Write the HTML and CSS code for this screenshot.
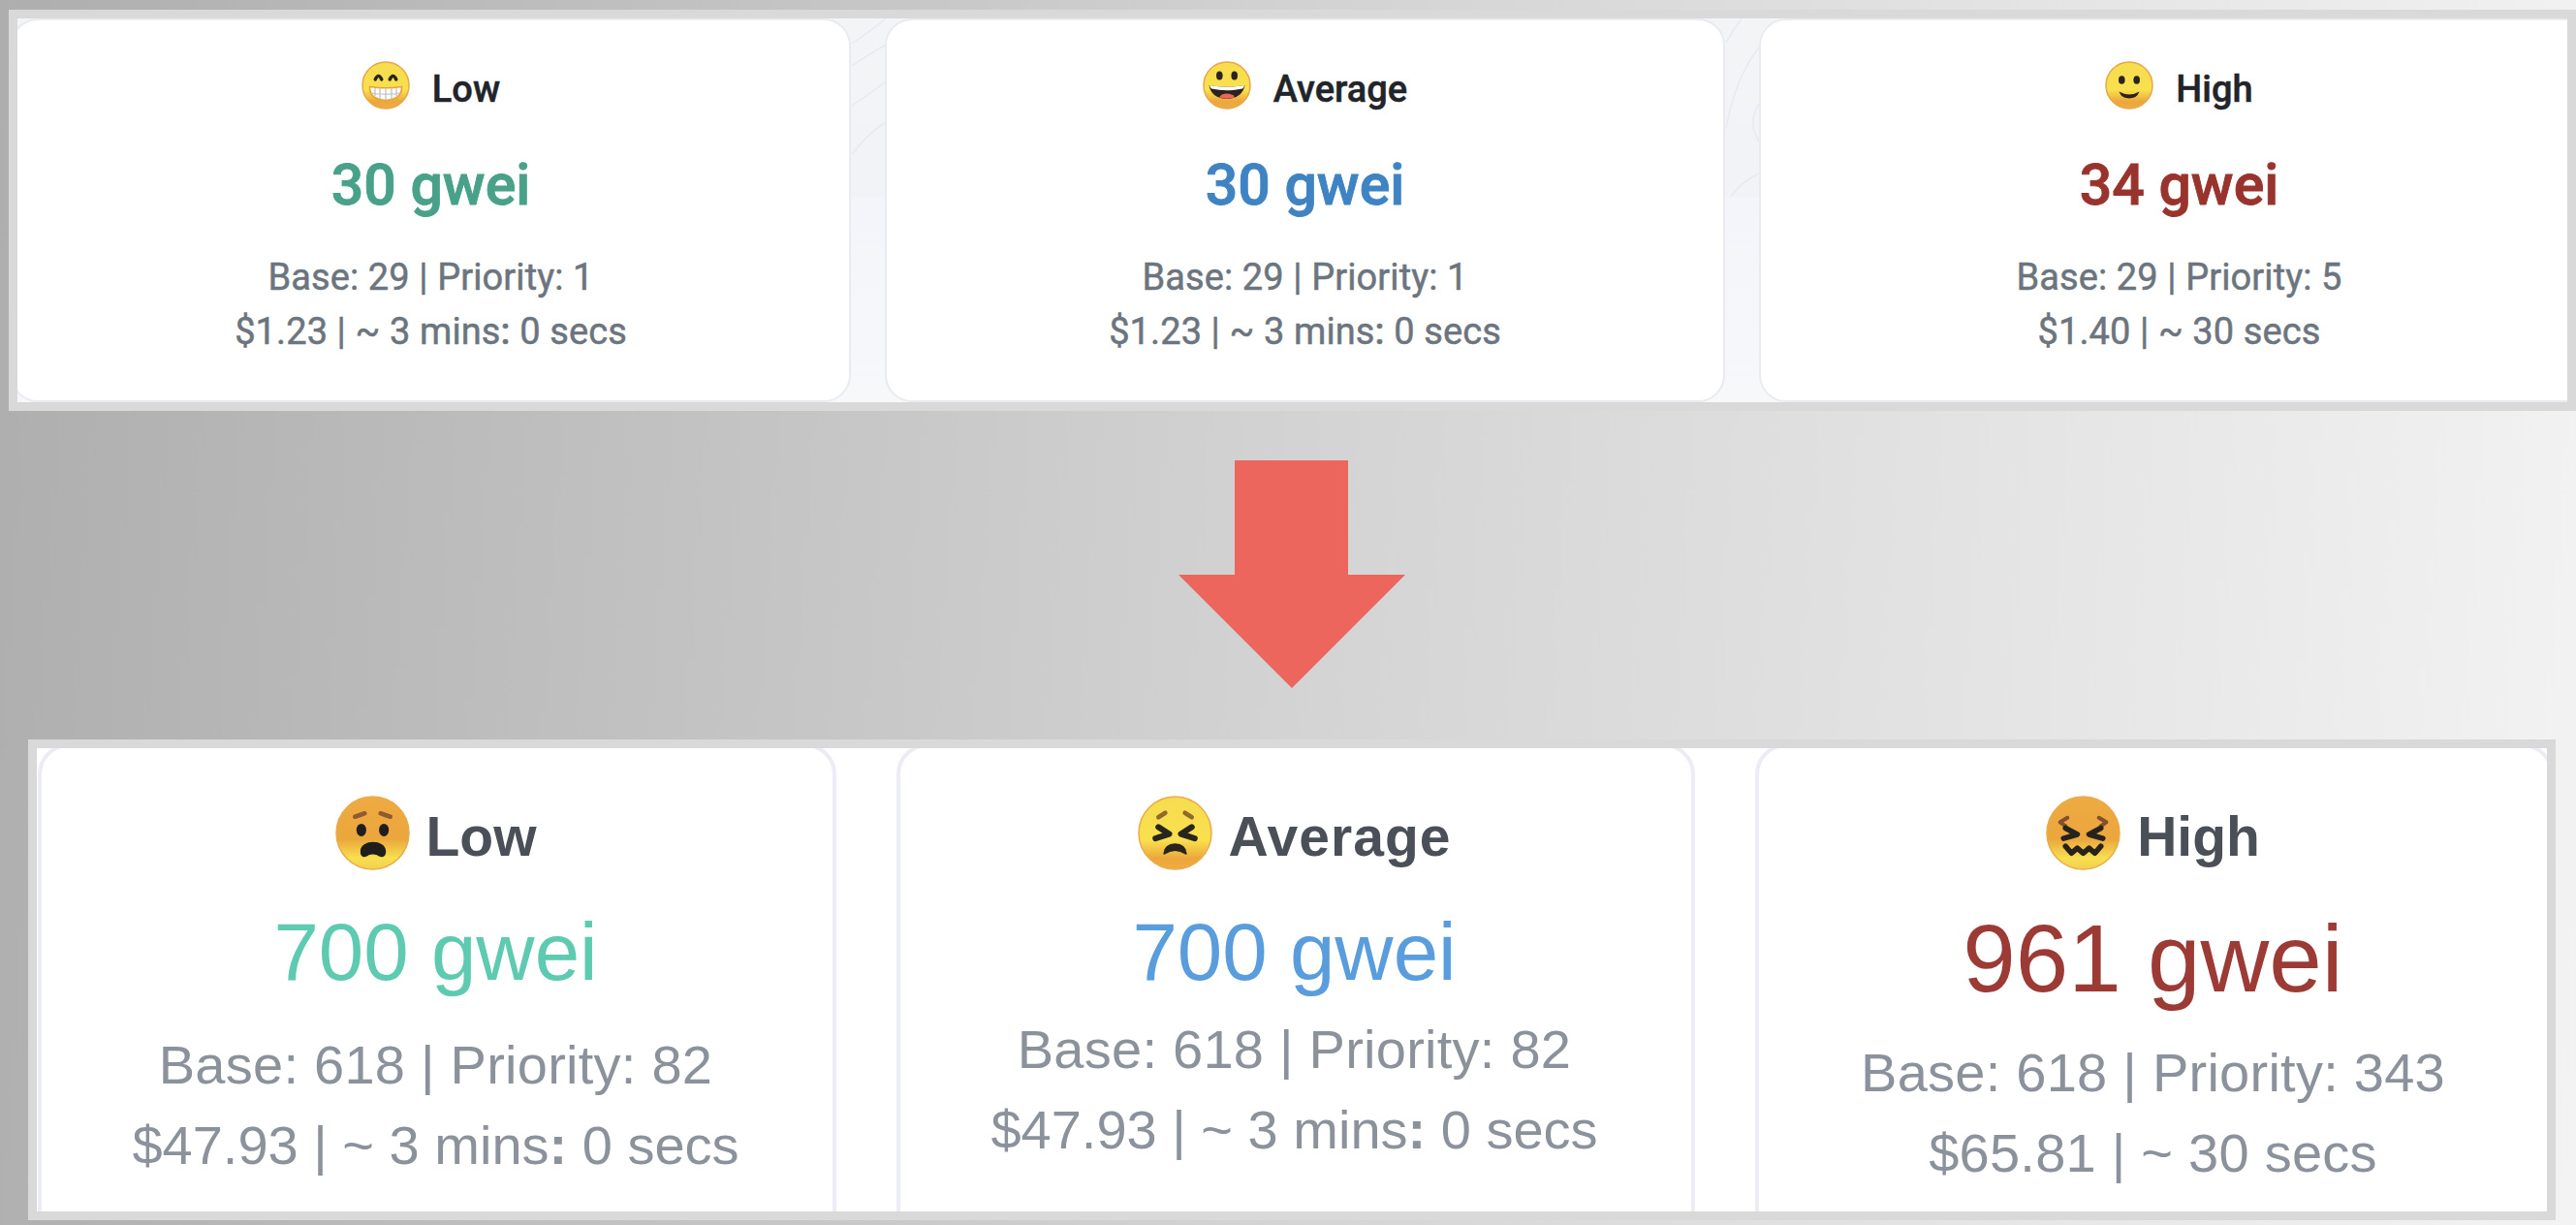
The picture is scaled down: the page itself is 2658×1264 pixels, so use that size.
FILE: index.html
```html
<!DOCTYPE html>
<html lang="en">
<head>
  <meta charset="UTF-8">
  <meta name="viewport" content="width=device-width, initial-scale=1.0">
  <title>Gas Tracker</title>
  <link rel="stylesheet" href="styles.css">
</head>

<body>

  <!-- shared fills for the faces -->
  <svg class="defs" width="0" height="0">
    <defs>
      <linearGradient id="happy" x1="0" y1="0" x2="0" y2="1">
        <stop offset="0" stop-color="#f6dc50"/>
        <stop offset="0.6" stop-color="#f9e04d"/>
        <stop offset="0.85" stop-color="#eca73b"/>
        <stop offset="1" stop-color="#f0ac42"/>
      </linearGradient>
      <linearGradient id="upset" x1="0" y1="0" x2="0" y2="1">
        <stop offset="0" stop-color="#eeab43"/>
        <stop offset="0.58" stop-color="#eba63c"/>
        <stop offset="0.85" stop-color="#f8e04f"/>
        <stop offset="1" stop-color="#f3cf4c"/>
      </linearGradient>
    </defs>
  </svg>

  <div class="panel before">
    <svg class="waves" viewBox="0 0 2631 396">
      <rect class="shade" width="2631" height="184"/>
      <path d="M861 26Q882 12 896 0M861 49Q880 36 896 27M861 90Q882 76 896 65M861 140Q878 118 896 107"/>
      <path d="M1763 25Q1770 12 1779 0M1763 113Q1773 60 1797 30M1797 88Q1785 108 1797 127M1768 184Q1779 168 1797 160"/>
    </svg>
    <div class="card">
      <div class="title">
        <svg class="face" viewBox="0 0 50 50">
          <circle cx="25" cy="25" r="24" fill="url(#happy)" stroke="#e9a64a" stroke-width="1.5"/>
          <path d="M14.2 19Q17.5 11.8 20.8 19M29.2 19Q32.5 11.8 35.8 19" fill="none" stroke="#2a241c" stroke-width="3.4" stroke-linecap="round"/>
          <path d="M8.5 26.5Q25 29 41.5 26.5Q42 39.5 25 40.5Q8 39.5 8.5 26.5Z" fill="#fff" stroke="#e6a33b" stroke-width="1.6"/>
          <path d="M10 33Q25 35.5 40 33M19 28V39.5M25 28.5V40M31 28V39.5M14 28V36M36 28V36" fill="none" stroke="#bdbdbd" stroke-width="1.2"/>
        </svg>
        <span>Low</span>
      </div>
      <div class="price green">30 gwei</div>
      <div class="info">Base: 29 | Priority: 1<br>$1.23 | ~ 3 mins<b>:</b> 0 secs</div>
    </div>
    <div class="card">
      <div class="title">
        <svg class="face" viewBox="0 0 50 50">
          <circle cx="25" cy="25" r="24" fill="url(#happy)" stroke="#e9a64a" stroke-width="1.5"/>
          <ellipse cx="17.3" cy="15" rx="3.3" ry="4.5" fill="#2a241c"/>
          <ellipse cx="32.7" cy="15" rx="3.3" ry="4.5" fill="#2a241c"/>
          <path d="M6.5 25Q25 28.5 43.5 25Q41 38.500 25 39Q9 38.500 6.5 25Z" fill="#29221d"/>
          <path d="M7 25Q25 28.5 43 25Q42.5 27.5 41 28.500Q25 32 9 28.500Q7.5 27.5 7 25Z" fill="#fff"/>
          <path d="M17 37.5Q19 33.5 25 33.5Q31 33.5 33 37.5Q25 40 17 37.5Z" fill="#e8665a"/>
        </svg>
        <span>Average</span>
      </div>
      <div class="price blue">30 gwei</div>
      <div class="info">Base: 29 | Priority: 1<br>$1.23 | ~ 3 mins<b>:</b> 0 secs</div>
    </div>
    <div class="card">
      <div class="title">
        <svg class="face" viewBox="0 0 50 50">
          <circle cx="25" cy="25" r="24" fill="url(#happy)" stroke="#e9a64a" stroke-width="1.5"/>
          <ellipse cx="17.3" cy="19.5" rx="3.3" ry="4.3" fill="#2a241c"/>
          <ellipse cx="32.7" cy="19.5" rx="3.3" ry="4.3" fill="#2a241c"/>
          <path d="M14.5 31.5Q25 37.5 35.5 31.5Q33 38.5 25 38.5Q17 38.5 14.5 31.5Z" fill="#2a241c"/>
        </svg>
        <span>High</span>
      </div>
      <div class="price red">34 gwei</div>
      <div class="info">Base: 29 | Priority: 5<br>$1.40 | ~ 30 secs</div>
    </div>
  </div>

  <svg class="arrow" viewBox="0 0 234 235">
    <path d="M58 0H175V118H234L117 235L0 118H58Z"/>
  </svg>

  <div class="panel after">
    <div class="card">
      <div class="title">
        <svg class="face" viewBox="0 0 76 76">
          <circle cx="38" cy="38" r="37" fill="url(#upset)" stroke="#e9ac4c" stroke-width="1.5"/>
          <path d="M20 21.5Q25 20 30 18M46 18Q51 20 56 21.5" fill="none" stroke="#91592f" stroke-width="4.5" stroke-linecap="round"/>
          <ellipse cx="26.5" cy="35" rx="5" ry="6.5" fill="#201d1d"/>
          <ellipse cx="49.5" cy="35" rx="5" ry="6.5" fill="#201d1d"/>
          <path d="M25.500 57C25.500 44 51.500 44 51.500 57C51.500 64 45 63 42.500 60.500Q38 59 34 60.500C31.500 63 25.500 64 25.500 57Z" fill="#201d1d"/>
        </svg>
        <span>Low</span>
      </div>
      <div class="price green">700 gwei</div>
      <div class="info"><span class="wide">Base: 618 | Priority: 82</span><br>$47.93 | ~ 3 mins<b>:</b> 0 secs</div>
    </div>
    <div class="card middle">
      <div class="title">
        <svg class="face" viewBox="0 0 76 76">
          <circle cx="38" cy="38" r="37" fill="url(#happy)" stroke="#e9ac4c" stroke-width="1.5"/>
          <path d="M21 22L28 17.5M48 17.5L55 22" fill="none" stroke="#91692f" stroke-width="4.5" stroke-linecap="round"/>
          <path d="M21 32L32 39L18 43.500M55 32L44 39L58 43.500" fill="none" stroke="#28261c" stroke-width="6" stroke-linejoin="round" stroke-linecap="round"/>
          <path d="M27 59Q28 49.5 38 49.5Q48 49.5 49 59Q38 51.5 27 59Z" fill="#28261c" stroke="#28261c" stroke-width="2" stroke-linejoin="round"/>
        </svg>
        <span>Average</span>
      </div>
      <div class="price blue">700 gwei</div>
      <div class="info"><span class="wide">Base: 618 | Priority: 82</span><br>$47.93 | ~ 3 mins<b>:</b> 0 secs</div>
    </div>
    <div class="card big">
      <div class="title">
        <svg class="face" viewBox="0 0 76 76">
          <circle cx="38" cy="38" r="37" fill="url(#upset)" stroke="#e9ac4c" stroke-width="1.5"/>
          <path d="M22 22.500L14.500 27L20 31M54 22.500L61.500 27L56 31" fill="none" stroke="#82502f" stroke-width="4" stroke-linejoin="round" stroke-linecap="round"/>
          <path d="M20 33L32 39.500L18 43.500M56 33L44 39.500L58 43.500" fill="none" stroke="#28221c" stroke-width="5.5" stroke-linejoin="round" stroke-linecap="round"/>
          <path d="M20 51.500L26 58.500L32 53.500L38 58.500L44 53.500L50 58.500L56 51.500" fill="none" stroke="#28221c" stroke-width="5.5" stroke-linejoin="round" stroke-linecap="round"/>
        </svg>
        <span>High</span>
      </div>
      <div class="price red">961 gwei</div>
      <div class="info wide">Base: 618 | Priority: 343<br>$65.81 | ~ 30 secs</div>
    </div>
  </div>

</body>
</html>
```
FILE: styles.css
```css
* {
    box-sizing: border-box;
}

body {
    margin: 0;
    height: 1264px;
    overflow: hidden;
    display: flex;
    flex-direction: column;
    background: linear-gradient(94deg, #aeaeae, #d3d3d3 50%, #f3f3f3);
}

.defs {
    position: absolute;
}

.panel {
    flex: none;
    display: flex;
    overflow: hidden;
    border: 9px solid #d9d9d9;
}

.card {
    flex: none;
    background-color: #fff;
    text-align: center;
}

.title {
    display: flex;
    justify-content: center;
}

.title span,
.price,
.info {
    white-space: nowrap;
}

/* top row */
.before {
    position: relative;
    width: 2649px;
    height: 414px;
    margin: 10px 0 0 9px;
    gap: 35px;
    background: linear-gradient(#f6f8fa, #f3f5fa 50%, #f7f8fa);
    font-family: Roboto, sans-serif;
}

.waves {
    position: absolute;
    left: 0;
    top: 0;
    width: 2631px;
    height: 396px;
    fill: none;
    stroke: #e7eaf1;
    stroke-width: 1.5;
}

.shade {
    fill: #f0f2f4;
    fill-opacity: 0.6;
    stroke: none;
}

.before .card {
    position: relative;
    width: 867px;
    height: 396px;
    border: 2px solid #e9ebf1;
    border-radius: 28px;
    padding-top: 42px;
}

.before .card:nth-of-type(1) {
    margin-left: -7px;
}

.before .title {
    gap: 23px;
    line-height: 58px;
    height: 50px;
    font-size: 38px;
    font-weight: 500;
    color: #212529;
    -webkit-text-stroke: 0.5px #212529;
}

.before .face {
    width: 50px;
    height: 50px;
}

.before .price {
    margin-top: 43px;
    font-size: 59px;
    line-height: 70px;
    font-weight: 500;
    -webkit-text-stroke: 0.9px currentColor;
}

.before .info {
    margin-top: 32px;
    font-size: 38px;
    line-height: 56.3px;
    letter-spacing: 0.1px;
    color: #6c757e;
    -webkit-text-stroke: 0.5px #6c757e;
}

.before .info b {
    font-weight: 500;
}

.before .green {
    color: #48a188;
}

.before .blue {
    color: #3f83c3;
}

.red {
    color: #98342d;
}

.arrow {
    flex: none;
    width: 234px;
    height: 235px;
    margin: 51px 0 0 1216px;
    fill: #ec665d;
}

/* bottom row */
.after {
    width: 2608px;
    height: 496px;
    margin: 53px 0 0 29px;
    gap: 62px;
    background-color: #fff;
    font-family: "Liberation Sans", Arial, sans-serif;
}

.after .card {
    width: 824px;
    height: 520px;
    margin-top: -5px;
    border: 4px solid #ececf6;
    border-radius: 32px;
    padding: 50px 3px 0 0;
}

.after .card:first-child {
    margin-left: 1px;
}

.after .title {
    gap: 17px;
    height: 77px;
    line-height: 84px;
    font-size: 57px;
    font-weight: bold;
    color: #4b4f57;
}

.after .middle .title {
    letter-spacing: 1px;
}

.after .face {
    width: 77px;
    height: 77px;
}

.after .price {
    margin-top: 36px;
    font-size: 83.5px;
    line-height: 96px;
}

.after .info {
    margin-top: 27px;
    font-size: 56px;
    line-height: 83.3px;
    color: #8c929c;
}

.after .wide {
    letter-spacing: 0.25px;
}

.after .middle .info {
    margin-top: 11px;
}

.after .big .price {
    margin-top: 43px;
    font-size: 98px;
}

.after .big .info {
    margin-top: 28px;
}

.after .green {
    color: #5ecab0;
}

.after .blue {
    color: #5a9ddd;
}

.after .red {
    color: #9c3a35;
}
```
